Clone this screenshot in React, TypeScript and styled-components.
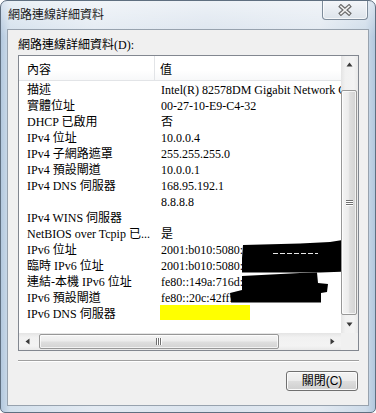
import React from "react";
import styled, { createGlobalStyle } from "styled-components";

const GlobalStyle = createGlobalStyle`
  html, body { margin: 0; padding: 0; background: #ffffff; }
  body { width: 376px; height: 413px; overflow: hidden; }
  *, *::before, *::after { box-sizing: border-box; }
`;

const SERIF = `"Liberation Serif", "Noto Sans CJK TC", serif`;
const SANS = `"Liberation Sans", "Noto Sans CJK TC", sans-serif`;

const Window = styled.div`
  width: 376px;
  height: 413px;
  border: 1px solid #5f6f80;
  border-radius: 7px 7px 5px 5px;
  background:
    linear-gradient(180deg, rgba(255, 255, 255, 0.5) 0px, rgba(255, 255, 255, 0) 36px),
    linear-gradient(90deg, #b3c8de 0%, #d3e0ec 2.5%, #e3eaf2 25%, #dbe4ee 55%, #e2e9f1 85%, #cddbe9 97.5%, #b3c8de 100%);
  display: flex;
  flex-direction: column;
  padding: 0 6px 6px 6px;
  font-family: ${SERIF};
  font-size: 12px;
  color: #000;
  overflow: hidden;
`;

const TitleBar = styled.div`
  flex: none;
  height: 28px;
  display: flex;
  align-items: flex-start;
  justify-content: space-between;
`;

const Title = styled.div`
  padding: 7px 0 0 1px;
  line-height: 14px;
  color: #1a1a1a;
  white-space: nowrap;
`;

const CloseButton = styled.div`
  margin-top: -1px;
  margin-right: 1px;
  width: 46px;
  height: 20px;
  border: 1px solid #7d8b9a;
  border-top: none;
  border-radius: 0 0 4px 4px;
  background: linear-gradient(180deg, #f5f7fa 0%, #e9edf2 50%, #dce3ea 100%);
  box-shadow: inset 0 0 0 1px rgba(255, 255, 255, 0.7);
  display: flex;
  align-items: center;
  justify-content: center;
`;

const Client = styled.div`
  flex: 1;
  background: #f0f0f0;
  border: 1px solid #97a2ae;
  display: flex;
  flex-direction: column;
  padding: 7px 9px 0 10px;
`;

const GroupLabel = styled.div`
  line-height: 16px;
  white-space: nowrap;
`;

const ListBox = styled.div`
  margin-top: 2px;
  height: 296px;
  border: 1px solid #828790;
  background: #ffffff;
  display: grid;
  grid-template-columns: 1fr 17px;
  grid-template-rows: 1fr 17px;
`;

const Viewport = styled.div`
  position: relative;
  overflow: hidden;
`;

const HeaderRow = styled.div`
  display: flex;
  height: 25px;
  border-bottom: 1px solid #e2e4e7;
  background: linear-gradient(180deg, #ffffff 0%, #ffffff 60%, #f7f8f9 100%);
`;

const HeaderCell = styled.div<{ $w?: number }>`
  flex: ${(p) => (p.$w ? `0 0 ${p.$w}px` : "1")};
  padding: 2px 0 0 ${(p) => (p.$w ? 8 : 5)}px;
  display: flex;
  align-items: center;
  border-right: ${(p) => (p.$w ? "1px solid #e2e4e7" : "none")};
  white-space: nowrap;
`;

const Rows = styled.div`
  padding-top: 1px;
`;

const Row = styled.div`
  display: flex;
  height: 16px;
  line-height: 16px;
  white-space: nowrap;
`;

const NameCell = styled.div`
  flex: 0 0 136px;
  padding-left: 8px;
  overflow: hidden;
`;

const ValueCell = styled.div`
  flex: 1;
  padding-left: 6px;
  overflow: hidden;
`;

const Overlay = styled.svg`
  position: absolute;
  left: 0;
  top: 0;
  width: 322px;
  height: 277px;
  pointer-events: none;
`;

const VScroll = styled.div`
  display: flex;
  flex-direction: column;
  background: linear-gradient(90deg, #e4e4e4 0%, #f1f1f1 25%, #f3f3f3 75%, #e9e9e9 100%);
`;

const HScroll = styled.div`
  display: flex;
  background: linear-gradient(180deg, #e4e4e4 0%, #f1f1f1 25%, #f3f3f3 75%, #e9e9e9 100%);
`;

const ArrowButton = styled.div<{ $size?: number }>`
  flex: 0 0 ${(p) => p.$size ?? 17}px;
  display: flex;
  align-items: center;
  justify-content: center;
`;

const VTrack = styled.div`
  flex: 1;
  display: flex;
  flex-direction: column;
`;

const HTrack = styled.div`
  flex: 1;
  display: flex;
  align-items: stretch;
`;

const VThumb = styled.div<{ $offset: number; $len: number }>`
  margin: ${(p) => p.$offset}px 1px 0 0;
  height: ${(p) => p.$len}px;
  border: 1px solid #979797;
  border-radius: 2px;
  background: linear-gradient(90deg, #f4f4f4 0%, #ececec 45%, #dedede 55%, #d3d3d3 100%);
  box-shadow: inset 0 0 0 1px rgba(255, 255, 255, 0.7);
  display: flex;
  align-items: center;
  justify-content: center;
`;

const HThumb = styled.div<{ $offset: number; $len: number }>`
  margin: 1px 0 1px ${(p) => p.$offset}px;
  width: ${(p) => p.$len}px;
  border: 1px solid #979797;
  border-radius: 2px;
  background: linear-gradient(180deg, #f4f4f4 0%, #ececec 45%, #dedede 55%, #d3d3d3 100%);
  box-shadow: inset 0 0 0 1px rgba(255, 255, 255, 0.7);
  display: flex;
  align-items: center;
  justify-content: center;
`;

const Corner = styled.div`
  background: #f0f0f0;
`;

const Separator = styled.div`
  margin-top: 9px;
  height: 2px;
  border-top: 1px solid #a0a0a0;
  border-bottom: 1px solid #ffffff;
`;

const PushButton = styled.div`
  align-self: flex-end;
  margin-top: 9px;
  margin-right: 1px;
  width: 72px;
  height: 20px;
  border: 1px solid #707070;
  border-radius: 3px;
  background: linear-gradient(180deg, #f3f3f3 0%, #ebebeb 48%, #dddddd 52%, #cfcfcf 100%);
  box-shadow: inset 0 0 0 1px #fbfbfb;
  display: flex;
  align-items: center;
  justify-content: center;
  font-family: ${SANS};
  font-size: 12px;
  line-height: 16px;
  color: #000;
`;

const rows: Array<[string, string]> = [
  ["描述", "Intel(R) 82578DM Gigabit Network Connection"],
  ["實體位址", "00-27-10-E9-C4-32"],
  ["DHCP 已啟用", "否"],
  ["IPv4 位址", "10.0.0.4"],
  ["IPv4 子網路遮罩", "255.255.255.0"],
  ["IPv4 預設閘道", "10.0.0.1"],
  ["IPv4 DNS 伺服器", "168.95.192.1"],
  ["", "8.8.8.8"],
  ["IPv4 WINS 伺服器", ""],
  ["NetBIOS over Tcpip 已...", "是"],
  ["IPv6 位址", "2001:b010:5080:"],
  ["臨時 IPv6 位址", "2001:b010:5080:"],
  ["連結-本機 IPv6 位址", "fe80::149a:716d:"],
  ["IPv6 預設閘道", "fe80::20c:42ff:"],
  ["IPv6 DNS 伺服器", ""],
];

const Arrow = ({ dir }: { dir: "up" | "down" | "left" | "right" }) => {
  const pts: Record<string, string> = {
    up: "0.5,4.5 3.5,0.5 6.5,4.5",
    down: "0.5,0.5 3.5,4.5 6.5,0.5",
    left: "4.5,0.5 0.5,3.5 4.5,6.5",
    right: "0.5,0.5 4.5,3.5 0.5,6.5",
  };
  const vertical = dir === "up" || dir === "down";
  return (
    <svg width={vertical ? 7 : 5} height={vertical ? 5 : 7} viewBox={vertical ? "0 0 7 5" : "0 0 5 7"}>
      <polygon points={pts[dir]} fill="#3a3a3a" />
    </svg>
  );
};

const VGrip = () => (
  <svg width="7" height="6" viewBox="0 0 7 6">
    <path d="M0 0.5H7M0 2.5H7M0 4.5H7" stroke="#6f6f6f" strokeWidth="1" />
    <path d="M0 1.5H7M0 3.5H7M0 5.5H7" stroke="#ffffff" strokeWidth="1" />
  </svg>
);

const HGrip = () => (
  <svg width="6" height="7" viewBox="0 0 6 7">
    <path d="M0.5 0V7M2.5 0V7M4.5 0V7" stroke="#6f6f6f" strokeWidth="1" />
    <path d="M1.5 0V7M3.5 0V7M5.5 0V7" stroke="#ffffff" strokeWidth="1" />
  </svg>
);

const CloseGlyph = () => (
  <svg width="14" height="12" viewBox="0 0 14 12">
    <path d="M3 2.5L11 9.5M11 2.5L3 9.5" stroke="#6c6c6c" strokeWidth="4" strokeLinecap="square" />
    <path d="M3 2.5L11 9.5M11 2.5L3 9.5" stroke="#f4f4f4" strokeWidth="1.6" strokeLinecap="square" />
  </svg>
);

export default function App() {
  return (
    <>
      <GlobalStyle />
      <Window>
        <TitleBar>
          <Title>網路連線詳細資料</Title>
          <CloseButton>
            <CloseGlyph />
          </CloseButton>
        </TitleBar>
        <Client>
          <GroupLabel>網路連線詳細資料(D):</GroupLabel>
          <ListBox>
            <Viewport>
              <HeaderRow>
                <HeaderCell $w={136}>內容</HeaderCell>
                <HeaderCell>值</HeaderCell>
              </HeaderRow>
              <Rows>
                {rows.map(([name, value], i) => (
                  <Row key={i}>
                    <NameCell>{name}</NameCell>
                    <ValueCell>{value}</ValueCell>
                  </Row>
                ))}
              </Rows>
              <Overlay viewBox="19 56 322 277" aria-hidden="true">
                <path
                  d="M243 245 L300 243.5 L330 242 L346 239.5 L345.5 251 L342 258 L345 263 L344 271.5 L320 272.5 L242 272.5 L242 258 Z"
                  fill="#000"
                />
                <line x1="273" y1="253.5" x2="318" y2="253.5" stroke="#e8e8e8" strokeWidth="1" strokeDasharray="5 2" />
                <path
                  d="M242 276 L300 273 L317 272.5 L318 283 L328 284 L327 292 L321 293 L321 302.5 L231 302.5 L230 293 L242 290 Z"
                  fill="#000"
                />
                <rect x="160" y="305" width="90" height="15" fill="#ffff00" />
              </Overlay>
            </Viewport>
            <VScroll>
              <ArrowButton>
                <Arrow dir="up" />
              </ArrowButton>
              <VTrack>
                <VThumb $offset={17} $len={225}>
                  <VGrip />
                </VThumb>
              </VTrack>
              <ArrowButton>
                <Arrow dir="down" />
              </ArrowButton>
            </VScroll>
            <HScroll>
              <ArrowButton>
                <Arrow dir="left" />
              </ArrowButton>
              <HTrack>
                <HThumb $offset={3} $len={240}>
                  <HGrip />
                </HThumb>
              </HTrack>
              <ArrowButton>
                <Arrow dir="right" />
              </ArrowButton>
            </HScroll>
            <Corner />
          </ListBox>
          <Separator />
          <PushButton>關閉(C)</PushButton>
        </Client>
      </Window>
    </>
  );
}
